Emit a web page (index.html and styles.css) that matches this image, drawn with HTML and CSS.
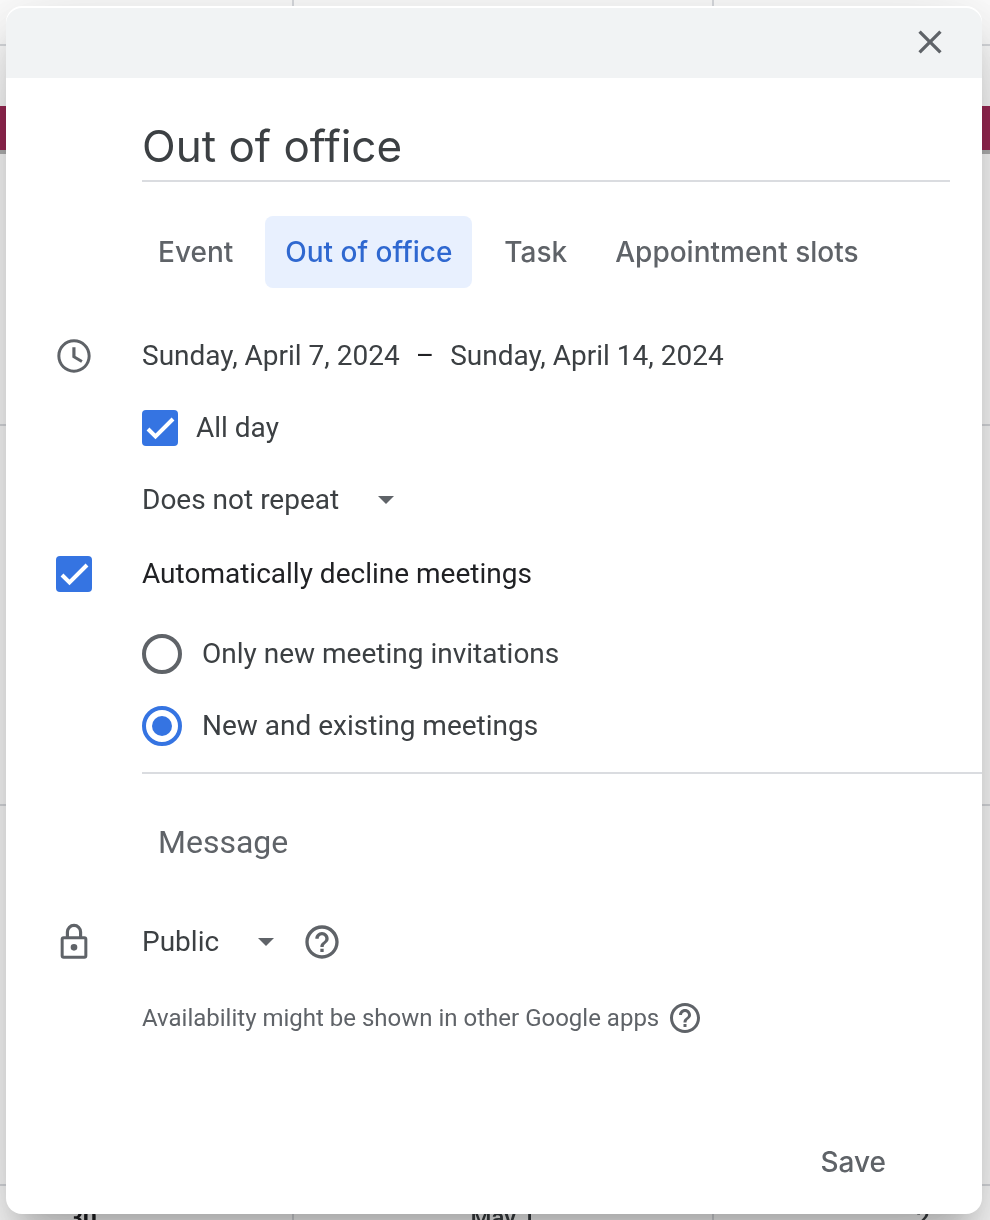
FILE: index.html
```html
<!DOCTYPE html>
<html lang="en">
<head>
<meta charset="utf-8">
<title>Out of office</title>
<link rel="stylesheet" href="styles.css">
</head>
<body>
<div class="calendar" aria-hidden="true">
  <div class="day"></div><div class="day"></div><div class="day"></div>
  <div class="day day-event"></div><div class="day day-event"></div><div class="day day-event"></div>
  <div class="day"></div><div class="day"></div><div class="day"></div>
  <div class="day"></div><div class="day"></div><div class="day"></div>
  <div class="day day-current">30</div><div class="day">May 1</div><div class="day">2</div>
</div>

<form class="dialog" role="dialog" aria-label="Out of office">
  <header class="dialog-header">
    <button class="icon-button" type="button" aria-label="Close">
      <svg width="48" height="48" viewBox="0 0 24 24"><path d="M19 6.41 17.59 5 12 10.59 6.41 5 5 6.41 10.59 12 5 17.59 6.41 19 12 13.41 17.59 19 19 17.59 13.41 12z" transform="translate(2.040 2.040) scale(.83)"/></svg>
    </button>
  </header>

  <div class="dialog-body">
    <input class="title" type="text" value="Out of office" aria-label="Title">

    <div class="tabs" role="tablist">
      <button class="tab" type="button" role="tab">Event</button>
      <button class="tab tab-active" type="button" role="tab" aria-selected="true">Out of office</button>
      <button class="tab" type="button" role="tab">Task</button>
      <button class="tab" type="button" role="tab">Appointment slots</button>
    </div>

    <div class="row">
      <span class="lead">
        <svg width="40" height="40" viewBox="0 0 24 24"><path d="M11.99 2C6.47 2 2 6.48 2 12s4.470 10 9.990 10C17.520 22 22 17.520 22 12S17.520 2 11.990 2zM12 20.200c-4.530 0-8.200-3.670-8.200-8.200s3.670-8.200 8.200-8.200 8.200 3.670 8.200 8.200-3.670 8.200-8.200 8.200zM12.900 6.800H11v6.100l5.300 3.200.9-1.500-4.300-2.600z"/></svg>
      </span>
      <button class="date" type="button">Sunday, April 7, 2024</button>
      <span class="dash">–</span>
      <button class="date" type="button">Sunday, April 14, 2024</button>
    </div>

    <div class="row">
      <span class="lead"></span>
      <label class="choice">
        <span class="check">
          <input type="checkbox" checked>
          <svg width="36" height="36" viewBox="0 0 36 36"><path d="M6 19 13.500 26.500 31 9"/></svg>
        </span>
        All day
      </label>
    </div>

    <div class="row">
      <span class="lead"></span>
      <span class="select">
        <select aria-label="Repeat"><option>Does not repeat</option></select>
        <svg width="16" height="8" viewBox="0 0 16 8"><path d="M0 0h16L8 8z"/></svg>
      </span>
    </div>

    <div class="row row-decline">
      <span class="lead">
        <span class="check">
          <input id="decline" type="checkbox" checked>
          <svg width="36" height="36" viewBox="0 0 36 36"><path d="M6 19 13.500 26.500 31 9"/></svg>
        </span>
      </span>
      <label class="decline-label" for="decline">Automatically decline meetings</label>
    </div>

    <div class="options">
      <label class="option"><input class="radio" type="radio" name="scope">Only new meeting invitations</label>
      <label class="option"><input class="radio" type="radio" name="scope" checked>New and existing meetings</label>
    </div>

    <textarea class="message" rows="1" placeholder="Message" aria-label="Message"></textarea>

    <div class="row">
      <span class="lead">
        <svg width="40" height="40" viewBox="0 0 24 24"><path d="M18.200 8.500H16.900V6a4.900 4.900 0 0 0-9.800 0v2.500H5.800A1.800 1.800 0 0 0 4 10.300v9.900A1.800 1.800 0 0 0 5.800 22h12.400a1.800 1.800 0 0 0 1.800-1.800v-9.900a1.800 1.800 0 0 0-1.800-1.800zM9 6a3 3 0 0 1 6 0v2.500H9zM18.200 20.200H5.800v-9.900h12.400zM12 17.200a2 2 0 1 0 0-4 2 2 0 0 0 0 4z"/></svg>
      </span>
      <span class="select">
        <select aria-label="Visibility"><option>Public</option></select>
        <svg width="16" height="8" viewBox="0 0 16 8"><path d="M0 0h16L8 8z"/></svg>
      </span>
      <button class="icon-button help" type="button" aria-label="About visibility">
        <svg width="40" height="40" viewBox="0 0 24 24"><path d="M11 18h2v-2h-2v2zm1-16C6.480 2 2 6.480 2 12s4.480 10 10 10 10-4.480 10-10S17.520 2 12 2zm0 18c-4.410 0-8-3.590-8-8s3.590-8 8-8 8 3.590 8 8-3.590 8-8 8zm0-14c-2.210 0-4 1.790-4 4h2c0-1.100.9-2 2-2s2 .9 2 2c0 2-3 1.750-3 5h2c0-2.250 3-2.500 3-5 0-2.210-1.790-4-4-4z"/></svg>
      </button>
    </div>

    <div class="row row-note">
      <span class="lead"></span>
      <span class="note">Availability might be shown in other Google apps</span>
      <button class="icon-button note-help" type="button" aria-label="About availability">
        <svg width="36" height="36" viewBox="0 0 24 24"><path d="M11 18h2v-2h-2v2zm1-16C6.480 2 2 6.480 2 12s4.480 10 10 10 10-4.480 10-10S17.520 2 12 2zm0 18c-4.410 0-8-3.590-8-8s3.590-8 8-8 8 3.590 8 8-3.590 8-8 8zm0-14c-2.210 0-4 1.790-4 4h2c0-1.100.9-2 2-2s2 .9 2 2c0 2-3 1.750-3 5h2c0-2.250 3-2.500 3-5 0-2.210-1.790-4-4-4z"/></svg>
      </button>
    </div>
  </div>

  <footer class="dialog-footer">
    <button class="save" type="submit">Save</button>
  </footer>
</form>
</body>
</html>
```
FILE: styles.css
```css
* { box-sizing: border-box; }

body {
  margin: 0;
  min-height: 100vh;
  display: flex;
  background: #fff;
  color: #3c4043;
  font: 28px/36px Roboto, sans-serif;
}

button, input, select, textarea {
  margin: 0;
  padding: 0;
  border: 0;
  background: none;
  color: inherit;
  font: inherit;
  outline: none;
  border-radius: 0;
}

svg { display: block; fill: #5f6368; }

/* Month grid behind the dialog */
.calendar {
  position: fixed;
  inset: 0 -144px 0 -126px;
  overflow: hidden;
  display: grid;
  grid-template-columns: repeat(3, 1fr);
  grid-template-rows: 46px repeat(4, 380px);
}

.day {
  padding-top: 14px;
  border: solid #dadce0;
  border-width: 0 2px 2px 0;
  text-align: center;
  font-size: 24px;
  font-weight: 500;
}

.day-current { color: #202124; font-weight: 700; }

.day-event::before {
  content: "";
  display: block;
  height: 44px;
  margin: 46px -2px 0;
  background: #9b2854;
  box-shadow: 0 4px #b4b4b4;
}

.dialog {
  position: relative;
  flex: 1;
  display: flex;
  flex-direction: column;
  margin: 6px 8px 6px 6px;
  padding-top: 2px;
  border-radius: 16px;
  background: #fff;
  box-shadow:
    0 48px 76px 6px rgba(0, 0, 0, .14),
    0 18px 92px 16px rgba(0, 0, 0, .12),
    0 22px 30px -14px rgba(0, 0, 0, .2);
}

.dialog-header {
  display: flex;
  align-items: center;
  justify-content: flex-end;
  height: 70px;
  padding: 0 28px 2px 0;
  border-radius: 16px 16px 0 0;
  background: #f1f3f4;
}

.icon-button { cursor: pointer; }

.dialog-body {
  display: flex;
  flex-direction: column;
  padding-top: 34px;
}

.title {
  height: 70px;
  margin: 0 32px 34px 136px;
  border-bottom: 2px solid #dadce0;
  font: 44px/48px Inter, sans-serif;
}

.tabs {
  display: flex;
  gap: 16px;
  margin: 0 0 32px 136px;
}

.tab {
  height: 72px;
  padding: 0 16px;
  border-radius: 8px;
  color: #5f6368;
  font: 500 28px/36px Inter, sans-serif;
  white-space: nowrap;
}

.tab-active { padding: 0 20px; background: #e8f0fe; color: #2f68d0; }

.row { display: flex; align-items: center; min-height: 72px; }

.lead {
  display: flex;
  justify-content: center;
  flex: 0 0 136px;
}

.dash { margin: 0 16px; color: #202124; }

.choice { display: flex; align-items: center; gap: 18px; }

.check { display: grid; }
.check > * { grid-area: 1 / 1; }
.check svg { fill: none; stroke: #fff; stroke-width: 4; pointer-events: none; }
.check input {
  appearance: none;
  width: 36px;
  height: 36px;
  border-radius: 4px;
  background: #3574e2;
}

.select { display: grid; align-items: center; }
.select > * { grid-area: 1 / 1; }
.select svg { justify-self: end; pointer-events: none; }
.select select { appearance: none; padding-right: 54px; }

.row-decline { min-height: 76px; }
.row-note { min-height: 80px; }
.decline-label { color: #202124; }

.options {
  margin: 6px 0 10px 136px;
}

.option { display: flex; align-items: center; gap: 20px; height: 72px; }

.radio {
  appearance: none;
  display: grid;
  place-items: center;
  width: 40px;
  height: 40px;
  border: 4px solid #5f6368;
  border-radius: 50%;
}
.radio:checked { border-color: #3574e2; }
.radio:checked::before {
  content: "";
  width: 20px;
  height: 20px;
  border-radius: 50%;
  background: #3574e2;
}

.message {
  height: 134px;
  margin-left: 136px;
  padding: 48px 16px;
  border-top: 2px solid #dadce0;
  font-size: 32px;
  line-height: 40px;
  resize: none;
  overflow: hidden;
}
.message::placeholder { color: #5f6368; opacity: 1; }

.help { margin-left: 28px; }

.note { color: #5f6368; font-size: 24px; }
.note-help { margin-left: 8px; }

.dialog-footer {
  display: flex;
  justify-content: flex-end;
  margin-top: auto;
  padding: 0 80px 16px;
}

.save {
  height: 72px;
  padding: 0 16px;
  color: #5f6368;
  font: 500 28px/36px Inter, sans-serif;
}
```
